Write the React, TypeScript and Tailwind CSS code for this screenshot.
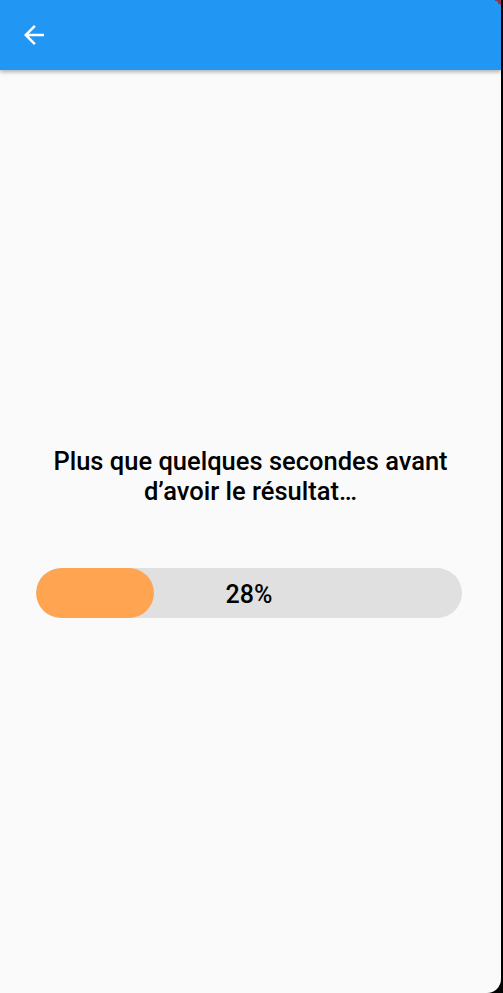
import React from "react";

export default function App() {
  const pct = 28;
  return (
    <div className="flex h-[993px] w-[503px] overflow-hidden bg-black" style={{ fontFamily: "Roboto, 'Noto Sans', sans-serif" }}>
      <div className="relative flex w-[501px] flex-col overflow-hidden rounded-br-[14px] bg-[#fafafa]">
        <header className="relative z-10 flex h-[70px] items-center bg-[#2196f3] px-[19px] shadow-[0_2px_4px_rgba(0,0,0,0.3)]">
          <svg width="30" height="30" viewBox="0 0 24 24" fill="#ffffff">
            <path d="M20 11H7.83l5.59-5.59L12 4l-8 8 8 8 1.41-1.41L7.83 13H20v-2z" />
          </svg>
          <div className="absolute right-0 top-0 h-[6px] w-[6px] bg-[linear-gradient(225deg,#8a3a55_50%,transparent_50%)]" />
        </header>
        <main className="flex flex-1 flex-col items-center pt-[376px]">
          <p className="text-center text-[25.5px] font-medium leading-[30px] text-black">
            Plus que quelques secondes avant
            <br />
            d’avoir le résultat…
          </p>
          <div className="relative mt-[62px] ml-[-3px] flex h-[50px] w-[426px] items-center justify-center overflow-hidden rounded-full bg-[#e0e0e0]">
            <div className="absolute left-0 top-0 h-full rounded-full bg-[#ffa552]" style={{ width: `${(pct / 28) * 118}px` }} />
            <span className="relative pt-[4px] text-[25px] font-medium text-black">{pct}%</span>
          </div>
        </main>
      </div>
      <div className="w-[2px] bg-black" />
    </div>
  );
}
